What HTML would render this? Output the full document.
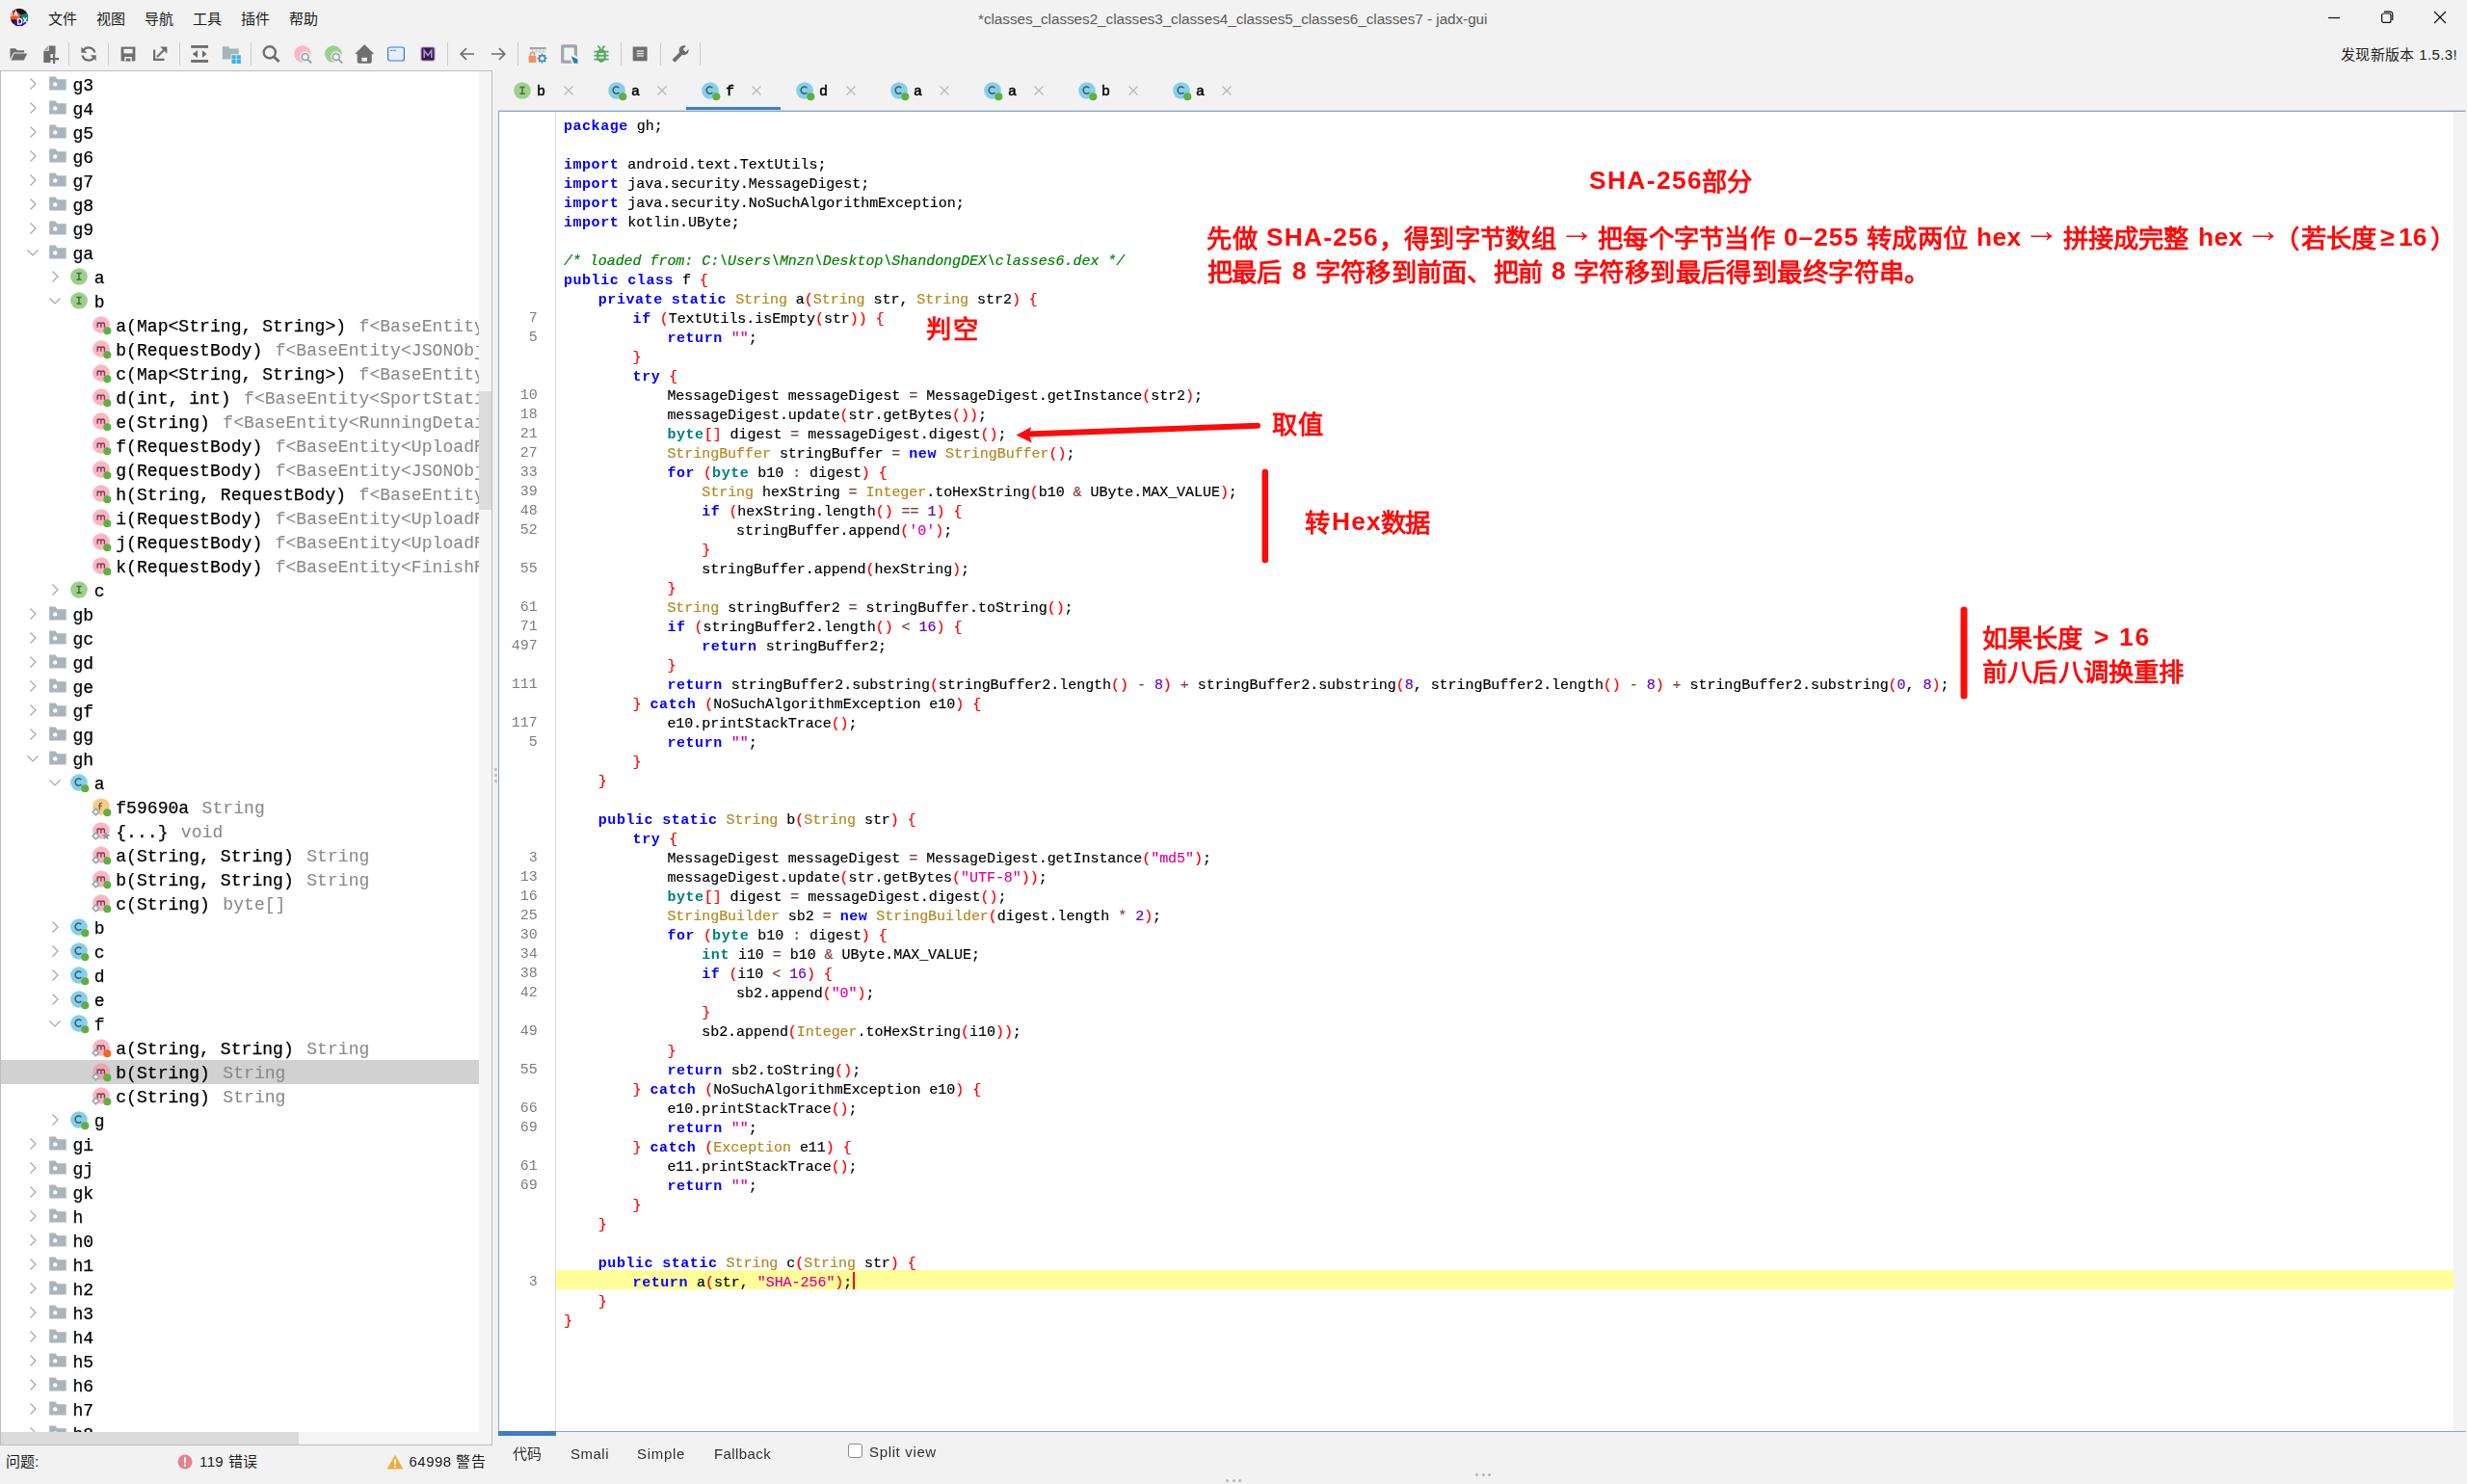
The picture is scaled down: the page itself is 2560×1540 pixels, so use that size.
<!DOCTYPE html>
<html lang="zh-CN">
<head>
<meta charset="utf-8">
<title>jadx-gui</title>
<style>
html,body{margin:0;padding:0}
body{width:2560px;height:1540px;overflow:hidden;background:#f2f2f2;position:relative;font-family:"Liberation Sans",sans-serif;font-size:15px;color:#1a1a1a}
.abs{position:absolute}
.t{position:absolute;white-space:nowrap;line-height:20px}
/* tree */
#tree{position:absolute;left:0;top:73px;width:509px;height:1425px;border:1px solid #bdbdbd;background:#fff}
#treeclip{will-change:transform;position:absolute;left:-1px;top:1px;width:498px;height:1411px;overflow:hidden}
#treeclip .tr{position:absolute;left:1px;width:496px;height:25px}
#treeclip .tr.sel{background:#d1d1d1}
#treeclip .tt{position:absolute;white-space:pre;font-family:"Liberation Mono",monospace;font-size:18px;line-height:25px;height:25px;color:#000;padding-top:2px;-webkit-text-stroke:.25px;letter-spacing:.06px}
#treeclip .g{color:#8a8a8a;margin-left:2.5px;-webkit-text-stroke:.1px}
#vtrack{position:absolute;left:496px;top:0;width:13px;height:1425px;background:#f5f5f5}
#vthumb{position:absolute;left:496px;top:332px;width:13px;height:123px;background:#dcdcdc}
#htrack{position:absolute;left:0;top:1412px;width:496px;height:13px;background:#f5f5f5}
#hthumb{position:absolute;left:0;top:1412px;width:309px;height:13px;background:#dbdbdb}
/* tabs */
.tabl{will-change:transform;position:absolute;top:85.9px;font-family:"Liberation Mono",monospace;font-weight:normal;-webkit-text-stroke:.5px;font-size:15px;line-height:20px;color:#000}
/* code */
#codep{will-change:transform;position:absolute;left:517px;top:115px;width:2042px;height:1371px;border:1px solid #7fa8d8;border-right-color:#f2f2f2;background:#fff;box-sizing:border-box}
#gutter{position:absolute;left:0;top:0;padding-top:2px;width:58px;border-right:1px solid #dddddd;height:1367px}
.gn{height:20px;line-height:20px;font-family:"Liberation Mono",monospace;font-size:15px;color:#7d7d7d;text-align:right;padding-right:18.2px;padding-top:3.4px;box-sizing:border-box}
#code{position:absolute;left:59px;top:2px;width:1969px;height:1366px;overflow:hidden}
.ln{height:20px;line-height:20px;white-space:pre;font-family:"Liberation Mono",monospace;font-size:15px;color:#000;padding-left:7.9px;padding-top:3.7px;box-sizing:border-box;letter-spacing:-0.042px;-webkit-text-stroke:.18px}
.ln.cur{background:#ffff99}
.kw{color:#0000ff;letter-spacing:.57px;-webkit-text-stroke:0}.ty{color:#008080;letter-spacing:.57px;-webkit-text-stroke:0}.cl{color:#b38820}.st{color:#dc009c}.nu{color:#6400c8}.br{color:#ff0000}.op{color:#804040}.cm{color:#008000}
.caret{display:inline-block;width:2px;height:18px;background:#ff0000;vertical-align:top;margin-top:-1.5px;margin-left:1px}
#cvtrack{position:absolute;left:2028px;top:0;width:13px;height:1369px;background:#f3f3f3}
.red{will-change:transform;position:absolute;white-space:nowrap;color:#ff0a0a;font-weight:bold;font-size:26.25px;line-height:36px;font-family:"Liberation Sans",sans-serif}
</style>
</head>
<body>
<!-- title bar -->
<svg class="abs" style="left:10px;top:8px" width="20" height="20" viewBox="0 0 20 20">
<defs><clipPath id="lc"><circle cx="10" cy="9.900" r="9.200"/></clipPath></defs>
<g clip-path="url(#lc)">
<rect width="20" height="20" fill="#17171b"/>
<path d="M0 2h5l2 4-3 4H0z" fill="#c2185b"/>
<path d="M0 7l7-3 5 3.500-3.500 8L6 12 0 13z" fill="#f4511e"/>
<path d="M12 7.500L20 5v9l-5 1-3.500-3z" fill="#00897b"/>
<path d="M4 16l4-3 7 1 3 6H6z" fill="#3514c8"/>
<path d="M2.200 3.800v3.400q0 1.600-1.600 1.300M4.800 9l1.700-5 1.700 5M5.400 7.400h2.200" stroke="#fff" stroke-width="1.300" fill="none"/>
<path d="M8.600 17.200v-5.800h1.300a2.900 2.900 0 0 1 0 5.800zM14.300 10.300l3.600 5.400M17.900 10.300l-3.600 5.400" stroke="#fff" stroke-width="1.300" fill="none"/>
</g></svg>
<div class="t" style="left:50px;top:10px">文件</div>
<div class="t" style="left:100px;top:10px">视图</div>
<div class="t" style="left:150px;top:10px">导航</div>
<div class="t" style="left:200px;top:10px">工具</div>
<div class="t" style="left:250px;top:10px">插件</div>
<div class="t" style="left:300px;top:10px">帮助</div>
<div class="t" id="title" style="left:1015px;top:9.5px;color:#5a5a5a;font-size:15.26px;letter-spacing:-.03px">*classes_classes2_classes3_classes4_classes5_classes6_classes7 - jadx-gui</div>
<svg class="abs" style="left:2412px;top:8px" width="20" height="20" viewBox="0 0 20 20"><path d="M4 10.500h12" stroke="#111" stroke-width="1.200"/></svg>
<svg class="abs" style="left:2467px;top:8px" width="20" height="20" viewBox="0 0 20 20"><rect x="4.600" y="6" width="9.400" height="9.400" rx="2" fill="none" stroke="#111" stroke-width="1.200"/><path d="M7 4.200h6.400a2.400 2.400 0 0 1 2.400 2.400v6.400" fill="none" stroke="#111" stroke-width="1.200"/></svg>
<svg class="abs" style="left:2522px;top:8px" width="20" height="20" viewBox="0 0 20 20"><path d="M4 4l12 12M16 4L4 16" stroke="#111" stroke-width="1.200"/></svg>
<!-- toolbar -->
<svg class="abs" style="left:8.6px;top:46px" width="20" height="20" viewBox="0 0 20 20"><path d="M1.5 15.5V4.2h5.6l1.8 2h7.2v2.2H5.2L1.5 15.5z" fill="#6e6e6e"/><path d="M5.8 9.4h13.4l-3.4 7H2.4z" fill="#6e6e6e"/></svg>
<svg class="abs" style="left:42.7px;top:46px" width="20" height="20" viewBox="0 0 20 20"><path d="M7.4 1.4h7.1v10h-3.9v7.5H2.3V6.5z" fill="#6e6e6e"/><path d="M2.3 6.5L7.4 1.4v5.1z" fill="#a9a9a9"/><path d="M2.3 8h12.2" stroke="#f2f2f2" stroke-width="0" /><rect x="9.4" y="10.2" width="9.6" height="9.8" fill="#f2f2f2"/><path d="M13.05 10.3v9.8M8.05 15.200h10" stroke="#6e6e6e" stroke-width="2.300"/><path d="M2.300 6.500h5.100V1.400" fill="none" stroke="#f2f2f2" stroke-width=".8"/></svg>
<svg class="abs" style="left:82.4px;top:46px" width="20" height="20" viewBox="0 0 20 20"><path d="M16.400 8.600A6.600 6.600 0 0 0 4.600 6.200" fill="none" stroke="#6e6e6e" stroke-width="2.300"/><path d="M2.300 2.800v6h6z" fill="#6e6e6e"/><path d="M3.600 11.400A6.600 6.600 0 0 0 15.400 13.800" fill="none" stroke="#6e6e6e" stroke-width="2.300"/><path d="M17.700 17.200v-6h-6z" fill="#6e6e6e"/></svg>
<svg class="abs" style="left:123.4px;top:46px" width="20" height="20" viewBox="0 0 20 20"><path d="M2.6 2.6h14.8v14.8H2.6z" fill="#6e6e6e"/><rect x="5.4" y="4.8" width="9.2" height="4.6" fill="#f2f2f2"/><rect x="6.2" y="13" width="7.6" height="4.4" fill="#f2f2f2"/><rect x="7.6" y="14.6" width="4.8" height="2.8" fill="#6e6e6e"/></svg>
<svg class="abs" style="left:155.9px;top:46px" width="20" height="20" viewBox="0 0 20 20"><path d="M3 5.5v11.5h11.5v-2.2H5.2V5.5z" fill="#6e6e6e"/><path d="M7 13L16 4" stroke="#6e6e6e" stroke-width="2.2"/><path d="M10.2 2.6h7.2v7.2z" fill="#6e6e6e"/></svg>
<svg class="abs" style="left:197.0px;top:46px" width="20" height="20" viewBox="0 0 20 20"><rect x="1.200" y="1" width="17.800" height="2.900" fill="#6e6e6e"/><rect x="1.200" y="16" width="17.800" height="2.900" fill="#6e6e6e"/><path d="M8 6.200v7.800L2.700 10.100z" fill="#6e6e6e"/><path d="M12.900 6.200v7.800L17.500 10.100z" fill="#6e6e6e"/></svg>
<svg class="abs" style="left:230.4px;top:46px" width="20" height="20" viewBox="0 0 20 20"><path d="M0.800 2.200h6.400l1.600 2.200h9v5.800H9.600v5.400H0.800z" fill="#a7b3bd"/><rect x="10.500" y="11.200" width="4.200" height="4.200" fill="#3fb0e2"/><rect x="15.600" y="11.200" width="4.200" height="4.200" fill="#3fb0e2"/><rect x="10.500" y="15.800" width="4.200" height="4.200" fill="#3fb0e2"/><rect x="15.600" y="15.800" width="4.200" height="4.200" fill="#3fb0e2"/></svg>
<svg class="abs" style="left:270.8px;top:46px" width="20" height="20" viewBox="0 0 20 20"><circle cx="8.800" cy="8.400" r="6.100" fill="none" stroke="#6e6e6e" stroke-width="2.400"/><path d="M13 12.600l5.600 5.400" stroke="#6e6e6e" stroke-width="2.900"/></svg>
<svg class="abs" style="left:303.7px;top:46px" width="20" height="20" viewBox="0 0 20 20"><circle cx="9.900" cy="10" r="8.800" fill="#fbb6c4"/><circle cx="12.900" cy="13" r="5.700" fill="#f2f2f2"/><circle cx="12.700" cy="13" r="3.500" fill="none" stroke="#8fa1ae" stroke-width="1.600"/><path d="M15.200 15.600l4 3.900" stroke="#8fa1ae" stroke-width="1.800"/></svg>
<svg class="abs" style="left:336.2px;top:46px" width="20" height="20" viewBox="0 0 20 20"><circle cx="9.900" cy="10" r="8.800" fill="#9dd08c"/><circle cx="12.900" cy="13" r="5.700" fill="#f2f2f2"/><circle cx="12.700" cy="13" r="3.500" fill="none" stroke="#8fa1ae" stroke-width="1.600"/><path d="M15.200 15.600l4 3.900" stroke="#8fa1ae" stroke-width="1.800"/></svg>
<svg class="abs" style="left:368.3px;top:46px" width="20" height="20" viewBox="0 0 20 20"><path d="M10.200 0.600L0.900 9.700h2.200v8.400a1.200 1.200 0 0 0 1.200 1.200h11.800a1.200 1.200 0 0 0 1.200-1.200V9.700h2.200z" fill="#6e6e6e" stroke="#6e6e6e" stroke-width="0.800" stroke-linejoin="round"/><rect x="7.400" y="13.800" width="5.600" height="3.800" fill="#f2f2f2"/></svg>
<svg class="abs" style="left:400.9px;top:46px" width="20" height="20" viewBox="0 0 20 20"><rect x="1.6" y="3" width="16.8" height="14" rx="2" fill="#e7effd" stroke="#3574f0" stroke-width="1.2"/><rect x="4.4" y="5.8" width="2" height="1.2" fill="#3574f0"/><rect x="7.6" y="5.8" width="2" height="1.2" fill="#3574f0"/></svg>
<svg class="abs" style="left:433.5px;top:46px" width="20" height="20" viewBox="0 0 20 20"><rect x="3" y="3" width="14" height="14" rx="1.6" fill="#2b2232" stroke="#b98af0" stroke-width="1.1"/><path d="M6.2 14V6.4l3.8 5 3.8-5V14" fill="none" stroke="#b98af0" stroke-width="1.6"/></svg>
<svg class="abs" style="left:474.8px;top:46px" width="20" height="20" viewBox="0 0 20 20"><path d="M17 10H3.6M9 4.2L3.2 10l5.8 5.8" fill="none" stroke="#6e6e6e" stroke-width="1.7"/></svg>
<svg class="abs" style="left:507.3px;top:46px" width="20" height="20" viewBox="0 0 20 20"><path d="M3 10h13.4M11 4.2l5.8 5.8-5.8 5.8" fill="none" stroke="#6e6e6e" stroke-width="1.7"/></svg>
<svg class="abs" style="left:548.1px;top:46px" width="20" height="20" viewBox="0 0 20 20"><path d="M1.8 3h17v2.2h-17z" fill="#9aa7b0"/><path d="M4.6 5v2.6M8.4 5v2.6M12.2 5v2.6M16 5v2.6M1.8 8h17" stroke="#c3cbd1" stroke-width="1.2" fill="none"/><rect x="0.6" y="12" width="7.8" height="7" rx="0.8" fill="#f49163"/><path d="M2.4 12.2v-1.6a2.1 2.1 0 0 1 4.2 0v1.6" fill="none" stroke="#f49163" stroke-width="1.5"/><circle cx="14.6" cy="14.6" r="3" fill="none" stroke="#3b8bbd" stroke-width="1.6"/><path d="M14.6 9.6v2M14.6 17.6v2M9.6 14.6h2M17.6 14.6h2M11.1 11.1l1.4 1.4M16.7 16.7l1.4 1.4M18.1 11.1l-1.4 1.4M12.5 16.7l-1.4 1.4" stroke="#3b8bbd" stroke-width="1.5"/></svg>
<svg class="abs" style="left:581.0px;top:46px" width="20" height="20" viewBox="0 0 20 20"><path d="M2.600 0.200h13.400a2 2 0 0 1 2 2V13l-3.300-2.400V3.500H4.300v12.900h6.600l1.700 3.300H2.600a1.500 1.500 0 0 1-1.500-1.500V1.700a1.500 1.500 0 0 1 1.500-1.500z" fill="#9aa7b0"/><path d="M11.800 12.200l6.700 3.300v4.200h-3.900z" fill="#2e7eab"/></svg>
<svg class="abs" style="left:613.5px;top:46px" width="20" height="20" viewBox="0 0 20 20"><ellipse cx="10" cy="11.700" rx="5" ry="7.300" fill="#5aa860"/><path d="M6.400 1.700l2.800 3M13.600 1.700l-2.800 3" stroke="#5aa860" stroke-width="1.800" fill="none"/><path d="M2.400 7.600h15.200M2.400 11.600h15.200M2.400 15.600h15.200" stroke="#5aa860" stroke-width="1.900"/><rect x="7.400" y="9" width="5.200" height="1.800" fill="#f2f2f2"/><rect x="7.400" y="12.800" width="5.200" height="1.800" fill="#f2f2f2"/></svg>
<svg class="abs" style="left:653.7px;top:46px" width="20" height="20" viewBox="0 0 20 20"><rect x="2.700" y="2.500" width="14.900" height="14.800" fill="#6e6e6e"/><path d="M6.700 6.900h7.400M6.700 9.500h7.400M6.700 12.100h7.400" stroke="#dcdcdc" stroke-width="1.500"/></svg>
<svg class="abs" style="left:696.2px;top:46px" width="20" height="20" viewBox="0 0 20 20"><path d="M2.900 17.300L12 8.200" stroke="#6e6e6e" stroke-width="4" fill="none"/><circle cx="13.600" cy="6.300" r="5" fill="#6e6e6e"/><path d="M12.700 5L17.900 -.2L20.800 2.700L15.600 7.900z" fill="#f2f2f2"/></svg>
<div class="abs" style="left:71px;top:44px;width:1px;height:24px;background:#cbcbcb"></div>
<div class="abs" style="left:112px;top:44px;width:1px;height:24px;background:#cbcbcb"></div>
<div class="abs" style="left:186px;top:44px;width:1px;height:24px;background:#cbcbcb"></div>
<div class="abs" style="left:260px;top:44px;width:1px;height:24px;background:#cbcbcb"></div>
<div class="abs" style="left:464px;top:44px;width:1px;height:24px;background:#cbcbcb"></div>
<div class="abs" style="left:537px;top:44px;width:1px;height:24px;background:#cbcbcb"></div>
<div class="abs" style="left:644px;top:44px;width:1px;height:24px;background:#cbcbcb"></div>
<div class="abs" style="left:685px;top:44px;width:1px;height:24px;background:#cbcbcb"></div>
<div class="abs" style="left:726px;top:44px;width:1px;height:24px;background:#cbcbcb"></div>
<div class="t" id="newver" style="left:2429px;top:47px;color:#222;letter-spacing:.35px">发现新版本 1.5.3!</div>
<!-- tree -->
<div id="tree">
<div id="treeclip">
<div class="tr" style="top:0px"></div>
<svg class="abs" style="left:29px;top:5.1px" width="10" height="14" viewBox="0 0 10 14"><path d="M2.5 1.5 L8 7 L2.5 12.5" fill="none" stroke="#a4a4a4" stroke-width="1.150"/></svg>
<svg class="abs" style="left:50.8px;top:3.5999999999999996px" width="18" height="15" viewBox="0 0 18 15"><path d="M0.2 0.6h6.3l2 2.6h9.2v11.2H0.2z" fill="#a9b5be"/><circle cx="6.2" cy="8.400" r="2.200" fill="#fff"/></svg>
<div class="tt" style="left:75.5px;top:0px">g3</div>
<div class="tr" style="top:25px"></div>
<svg class="abs" style="left:29px;top:30.1px" width="10" height="14" viewBox="0 0 10 14"><path d="M2.5 1.5 L8 7 L2.5 12.5" fill="none" stroke="#a4a4a4" stroke-width="1.150"/></svg>
<svg class="abs" style="left:50.8px;top:28.6px" width="18" height="15" viewBox="0 0 18 15"><path d="M0.2 0.6h6.3l2 2.6h9.2v11.2H0.2z" fill="#a9b5be"/><circle cx="6.2" cy="8.400" r="2.200" fill="#fff"/></svg>
<div class="tt" style="left:75.5px;top:25px">g4</div>
<div class="tr" style="top:50px"></div>
<svg class="abs" style="left:29px;top:55.1px" width="10" height="14" viewBox="0 0 10 14"><path d="M2.5 1.5 L8 7 L2.5 12.5" fill="none" stroke="#a4a4a4" stroke-width="1.150"/></svg>
<svg class="abs" style="left:50.8px;top:53.6px" width="18" height="15" viewBox="0 0 18 15"><path d="M0.2 0.6h6.3l2 2.6h9.2v11.2H0.2z" fill="#a9b5be"/><circle cx="6.2" cy="8.400" r="2.200" fill="#fff"/></svg>
<div class="tt" style="left:75.5px;top:50px">g5</div>
<div class="tr" style="top:75px"></div>
<svg class="abs" style="left:29px;top:80.1px" width="10" height="14" viewBox="0 0 10 14"><path d="M2.5 1.5 L8 7 L2.5 12.5" fill="none" stroke="#a4a4a4" stroke-width="1.150"/></svg>
<svg class="abs" style="left:50.8px;top:78.6px" width="18" height="15" viewBox="0 0 18 15"><path d="M0.2 0.6h6.3l2 2.6h9.2v11.2H0.2z" fill="#a9b5be"/><circle cx="6.2" cy="8.400" r="2.200" fill="#fff"/></svg>
<div class="tt" style="left:75.5px;top:75px">g6</div>
<div class="tr" style="top:100px"></div>
<svg class="abs" style="left:29px;top:105.1px" width="10" height="14" viewBox="0 0 10 14"><path d="M2.5 1.5 L8 7 L2.5 12.5" fill="none" stroke="#a4a4a4" stroke-width="1.150"/></svg>
<svg class="abs" style="left:50.8px;top:103.6px" width="18" height="15" viewBox="0 0 18 15"><path d="M0.2 0.6h6.3l2 2.6h9.2v11.2H0.2z" fill="#a9b5be"/><circle cx="6.2" cy="8.400" r="2.200" fill="#fff"/></svg>
<div class="tt" style="left:75.5px;top:100px">g7</div>
<div class="tr" style="top:125px"></div>
<svg class="abs" style="left:29px;top:130.1px" width="10" height="14" viewBox="0 0 10 14"><path d="M2.5 1.5 L8 7 L2.5 12.5" fill="none" stroke="#a4a4a4" stroke-width="1.150"/></svg>
<svg class="abs" style="left:50.8px;top:128.6px" width="18" height="15" viewBox="0 0 18 15"><path d="M0.2 0.6h6.3l2 2.6h9.2v11.2H0.2z" fill="#a9b5be"/><circle cx="6.2" cy="8.400" r="2.200" fill="#fff"/></svg>
<div class="tt" style="left:75.5px;top:125px">g8</div>
<div class="tr" style="top:150px"></div>
<svg class="abs" style="left:29px;top:155.1px" width="10" height="14" viewBox="0 0 10 14"><path d="M2.5 1.5 L8 7 L2.5 12.5" fill="none" stroke="#a4a4a4" stroke-width="1.150"/></svg>
<svg class="abs" style="left:50.8px;top:153.6px" width="18" height="15" viewBox="0 0 18 15"><path d="M0.2 0.6h6.3l2 2.6h9.2v11.2H0.2z" fill="#a9b5be"/><circle cx="6.2" cy="8.400" r="2.200" fill="#fff"/></svg>
<div class="tt" style="left:75.5px;top:150px">g9</div>
<div class="tr" style="top:175px"></div>
<svg class="abs" style="left:27px;top:181.6px" width="14" height="10" viewBox="0 0 14 10"><path d="M1.5 2.5 L7 8 L12.5 2.5" fill="none" stroke="#a4a4a4" stroke-width="1.150"/></svg>
<svg class="abs" style="left:50.8px;top:178.6px" width="18" height="15" viewBox="0 0 18 15"><path d="M0.2 0.6h6.3l2 2.6h9.2v11.2H0.2z" fill="#a9b5be"/><circle cx="6.2" cy="8.400" r="2.200" fill="#fff"/></svg>
<div class="tt" style="left:75.5px;top:175px">ga</div>
<div class="tr" style="top:200px"></div>
<svg class="abs" style="left:51.7px;top:205.1px" width="10" height="14" viewBox="0 0 10 14"><path d="M2.5 1.5 L8 7 L2.5 12.5" fill="none" stroke="#a4a4a4" stroke-width="1.150"/></svg>
<svg class="abs" style="left:72.1px;top:201.6px" width="22" height="22" viewBox="0 0 22 22"><circle cx="10" cy="10" r="8.85" fill="#9dd08c"/><path d="M7.4 6.6h5.2M7.4 13.2h5.2M10 6.6v6.6" stroke="#4d6b45" stroke-width="1.5" fill="none"/></svg>
<div class="tt" style="left:97.7px;top:200px">a</div>
<div class="tr" style="top:225px"></div>
<svg class="abs" style="left:49.7px;top:231.6px" width="14" height="10" viewBox="0 0 14 10"><path d="M1.5 2.5 L7 8 L12.5 2.5" fill="none" stroke="#a4a4a4" stroke-width="1.150"/></svg>
<svg class="abs" style="left:72.1px;top:226.6px" width="22" height="22" viewBox="0 0 22 22"><circle cx="10" cy="10" r="8.85" fill="#9dd08c"/><path d="M7.4 6.6h5.2M7.4 13.2h5.2M10 6.6v6.6" stroke="#4d6b45" stroke-width="1.5" fill="none"/></svg>
<div class="tt" style="left:97.7px;top:225px">b</div>
<div class="tr" style="top:250px"></div>
<svg class="abs" style="left:94.6px;top:251.60000000000002px" width="22" height="22" viewBox="0 0 22 22"><circle cx="10" cy="10" r="8.85" fill="#fbb6c4"/><path d="M6.2 12.8V7.6M6.2 9q1.9-2 3.6 0v3.8M9.8 9q1.900-2 3.600 0v3.800" stroke="#7c3f4b" stroke-width="1.400" fill="none"/><circle cx="16.3" cy="16.3" r="4.05" fill="#5fb041"/></svg>
<div class="tt" style="left:120.2px;top:250px">a(Map&lt;String, String&gt;) <span class="g">f&lt;BaseEntity&lt;ArrayList&lt;</span></div>
<div class="tr" style="top:275px"></div>
<svg class="abs" style="left:94.6px;top:276.6px" width="22" height="22" viewBox="0 0 22 22"><circle cx="10" cy="10" r="8.85" fill="#fbb6c4"/><path d="M6.2 12.8V7.6M6.2 9q1.9-2 3.6 0v3.8M9.8 9q1.900-2 3.600 0v3.800" stroke="#7c3f4b" stroke-width="1.400" fill="none"/><circle cx="16.3" cy="16.3" r="4.05" fill="#5fb041"/></svg>
<div class="tt" style="left:120.2px;top:275px">b(RequestBody) <span class="g">f&lt;BaseEntity&lt;JSONObject&gt;&gt;</span></div>
<div class="tr" style="top:300px"></div>
<svg class="abs" style="left:94.6px;top:301.6px" width="22" height="22" viewBox="0 0 22 22"><circle cx="10" cy="10" r="8.85" fill="#fbb6c4"/><path d="M6.2 12.8V7.6M6.2 9q1.9-2 3.6 0v3.8M9.8 9q1.900-2 3.600 0v3.800" stroke="#7c3f4b" stroke-width="1.400" fill="none"/><circle cx="16.3" cy="16.3" r="4.05" fill="#5fb041"/></svg>
<div class="tt" style="left:120.2px;top:300px">c(Map&lt;String, String&gt;) <span class="g">f&lt;BaseEntity&lt;ArrayList&lt;</span></div>
<div class="tr" style="top:325px"></div>
<svg class="abs" style="left:94.6px;top:326.6px" width="22" height="22" viewBox="0 0 22 22"><circle cx="10" cy="10" r="8.85" fill="#fbb6c4"/><path d="M6.2 12.8V7.6M6.2 9q1.9-2 3.6 0v3.8M9.8 9q1.900-2 3.600 0v3.800" stroke="#7c3f4b" stroke-width="1.400" fill="none"/><circle cx="16.3" cy="16.3" r="4.05" fill="#5fb041"/></svg>
<div class="tt" style="left:120.2px;top:325px">d(int, int) <span class="g">f&lt;BaseEntity&lt;SportStatistics&gt;&gt;</span></div>
<div class="tr" style="top:350px"></div>
<svg class="abs" style="left:94.6px;top:351.6px" width="22" height="22" viewBox="0 0 22 22"><circle cx="10" cy="10" r="8.85" fill="#fbb6c4"/><path d="M6.2 12.8V7.6M6.2 9q1.9-2 3.6 0v3.8M9.8 9q1.900-2 3.600 0v3.800" stroke="#7c3f4b" stroke-width="1.400" fill="none"/><circle cx="16.3" cy="16.3" r="4.05" fill="#5fb041"/></svg>
<div class="tt" style="left:120.2px;top:350px">e(String) <span class="g">f&lt;BaseEntity&lt;RunningDetail&gt;&gt;</span></div>
<div class="tr" style="top:375px"></div>
<svg class="abs" style="left:94.6px;top:376.6px" width="22" height="22" viewBox="0 0 22 22"><circle cx="10" cy="10" r="8.85" fill="#fbb6c4"/><path d="M6.2 12.8V7.6M6.2 9q1.9-2 3.6 0v3.8M9.8 9q1.900-2 3.600 0v3.800" stroke="#7c3f4b" stroke-width="1.400" fill="none"/><circle cx="16.3" cy="16.3" r="4.05" fill="#5fb041"/></svg>
<div class="tt" style="left:120.2px;top:375px">f(RequestBody) <span class="g">f&lt;BaseEntity&lt;UploadResult&gt;&gt;</span></div>
<div class="tr" style="top:400px"></div>
<svg class="abs" style="left:94.6px;top:401.6px" width="22" height="22" viewBox="0 0 22 22"><circle cx="10" cy="10" r="8.85" fill="#fbb6c4"/><path d="M6.2 12.8V7.6M6.2 9q1.9-2 3.6 0v3.8M9.8 9q1.900-2 3.600 0v3.800" stroke="#7c3f4b" stroke-width="1.400" fill="none"/><circle cx="16.3" cy="16.3" r="4.05" fill="#5fb041"/></svg>
<div class="tt" style="left:120.2px;top:400px">g(RequestBody) <span class="g">f&lt;BaseEntity&lt;JSONObject&gt;&gt;</span></div>
<div class="tr" style="top:425px"></div>
<svg class="abs" style="left:94.6px;top:426.6px" width="22" height="22" viewBox="0 0 22 22"><circle cx="10" cy="10" r="8.85" fill="#fbb6c4"/><path d="M6.2 12.8V7.6M6.2 9q1.9-2 3.6 0v3.8M9.8 9q1.900-2 3.600 0v3.800" stroke="#7c3f4b" stroke-width="1.400" fill="none"/><circle cx="16.3" cy="16.3" r="4.05" fill="#5fb041"/></svg>
<div class="tt" style="left:120.2px;top:425px">h(String, RequestBody) <span class="g">f&lt;BaseEntity&lt;JSONObject&gt;&gt;</span></div>
<div class="tr" style="top:450px"></div>
<svg class="abs" style="left:94.6px;top:451.6px" width="22" height="22" viewBox="0 0 22 22"><circle cx="10" cy="10" r="8.85" fill="#fbb6c4"/><path d="M6.2 12.8V7.6M6.2 9q1.9-2 3.6 0v3.8M9.8 9q1.900-2 3.600 0v3.800" stroke="#7c3f4b" stroke-width="1.400" fill="none"/><circle cx="16.3" cy="16.3" r="4.05" fill="#5fb041"/></svg>
<div class="tt" style="left:120.2px;top:450px">i(RequestBody) <span class="g">f&lt;BaseEntity&lt;UploadResult&gt;&gt;</span></div>
<div class="tr" style="top:475px"></div>
<svg class="abs" style="left:94.6px;top:476.6px" width="22" height="22" viewBox="0 0 22 22"><circle cx="10" cy="10" r="8.85" fill="#fbb6c4"/><path d="M6.2 12.8V7.6M6.2 9q1.9-2 3.6 0v3.8M9.8 9q1.900-2 3.600 0v3.800" stroke="#7c3f4b" stroke-width="1.400" fill="none"/><circle cx="16.3" cy="16.3" r="4.05" fill="#5fb041"/></svg>
<div class="tt" style="left:120.2px;top:475px">j(RequestBody) <span class="g">f&lt;BaseEntity&lt;UploadResult&gt;&gt;</span></div>
<div class="tr" style="top:500px"></div>
<svg class="abs" style="left:94.6px;top:501.6px" width="22" height="22" viewBox="0 0 22 22"><circle cx="10" cy="10" r="8.85" fill="#fbb6c4"/><path d="M6.2 12.8V7.6M6.2 9q1.9-2 3.6 0v3.8M9.8 9q1.900-2 3.600 0v3.800" stroke="#7c3f4b" stroke-width="1.400" fill="none"/><circle cx="16.3" cy="16.3" r="4.05" fill="#5fb041"/></svg>
<div class="tt" style="left:120.2px;top:500px">k(RequestBody) <span class="g">f&lt;BaseEntity&lt;FinishResult&gt;&gt;</span></div>
<div class="tr" style="top:525px"></div>
<svg class="abs" style="left:51.7px;top:530.1px" width="10" height="14" viewBox="0 0 10 14"><path d="M2.5 1.5 L8 7 L2.5 12.5" fill="none" stroke="#a4a4a4" stroke-width="1.150"/></svg>
<svg class="abs" style="left:72.1px;top:526.6px" width="22" height="22" viewBox="0 0 22 22"><circle cx="10" cy="10" r="8.85" fill="#9dd08c"/><path d="M7.4 6.6h5.2M7.4 13.2h5.2M10 6.6v6.6" stroke="#4d6b45" stroke-width="1.5" fill="none"/></svg>
<div class="tt" style="left:97.7px;top:525px">c</div>
<div class="tr" style="top:550px"></div>
<svg class="abs" style="left:29px;top:555.1px" width="10" height="14" viewBox="0 0 10 14"><path d="M2.5 1.5 L8 7 L2.5 12.5" fill="none" stroke="#a4a4a4" stroke-width="1.150"/></svg>
<svg class="abs" style="left:50.8px;top:553.6px" width="18" height="15" viewBox="0 0 18 15"><path d="M0.2 0.6h6.3l2 2.6h9.2v11.2H0.2z" fill="#a9b5be"/><circle cx="6.2" cy="8.400" r="2.200" fill="#fff"/></svg>
<div class="tt" style="left:75.5px;top:550px">gb</div>
<div class="tr" style="top:575px"></div>
<svg class="abs" style="left:29px;top:580.1px" width="10" height="14" viewBox="0 0 10 14"><path d="M2.5 1.5 L8 7 L2.5 12.5" fill="none" stroke="#a4a4a4" stroke-width="1.150"/></svg>
<svg class="abs" style="left:50.8px;top:578.6px" width="18" height="15" viewBox="0 0 18 15"><path d="M0.2 0.6h6.3l2 2.6h9.2v11.2H0.2z" fill="#a9b5be"/><circle cx="6.2" cy="8.400" r="2.200" fill="#fff"/></svg>
<div class="tt" style="left:75.5px;top:575px">gc</div>
<div class="tr" style="top:600px"></div>
<svg class="abs" style="left:29px;top:605.1px" width="10" height="14" viewBox="0 0 10 14"><path d="M2.5 1.5 L8 7 L2.5 12.5" fill="none" stroke="#a4a4a4" stroke-width="1.150"/></svg>
<svg class="abs" style="left:50.8px;top:603.6px" width="18" height="15" viewBox="0 0 18 15"><path d="M0.2 0.6h6.3l2 2.6h9.2v11.2H0.2z" fill="#a9b5be"/><circle cx="6.2" cy="8.400" r="2.200" fill="#fff"/></svg>
<div class="tt" style="left:75.5px;top:600px">gd</div>
<div class="tr" style="top:625px"></div>
<svg class="abs" style="left:29px;top:630.1px" width="10" height="14" viewBox="0 0 10 14"><path d="M2.5 1.5 L8 7 L2.5 12.5" fill="none" stroke="#a4a4a4" stroke-width="1.150"/></svg>
<svg class="abs" style="left:50.8px;top:628.6px" width="18" height="15" viewBox="0 0 18 15"><path d="M0.2 0.6h6.3l2 2.6h9.2v11.2H0.2z" fill="#a9b5be"/><circle cx="6.2" cy="8.400" r="2.200" fill="#fff"/></svg>
<div class="tt" style="left:75.5px;top:625px">ge</div>
<div class="tr" style="top:650px"></div>
<svg class="abs" style="left:29px;top:655.1px" width="10" height="14" viewBox="0 0 10 14"><path d="M2.5 1.5 L8 7 L2.5 12.5" fill="none" stroke="#a4a4a4" stroke-width="1.150"/></svg>
<svg class="abs" style="left:50.8px;top:653.6px" width="18" height="15" viewBox="0 0 18 15"><path d="M0.2 0.6h6.3l2 2.6h9.2v11.2H0.2z" fill="#a9b5be"/><circle cx="6.2" cy="8.400" r="2.200" fill="#fff"/></svg>
<div class="tt" style="left:75.5px;top:650px">gf</div>
<div class="tr" style="top:675px"></div>
<svg class="abs" style="left:29px;top:680.1px" width="10" height="14" viewBox="0 0 10 14"><path d="M2.5 1.5 L8 7 L2.5 12.5" fill="none" stroke="#a4a4a4" stroke-width="1.150"/></svg>
<svg class="abs" style="left:50.8px;top:678.6px" width="18" height="15" viewBox="0 0 18 15"><path d="M0.2 0.6h6.3l2 2.6h9.2v11.2H0.2z" fill="#a9b5be"/><circle cx="6.2" cy="8.400" r="2.200" fill="#fff"/></svg>
<div class="tt" style="left:75.5px;top:675px">gg</div>
<div class="tr" style="top:700px"></div>
<svg class="abs" style="left:27px;top:706.6px" width="14" height="10" viewBox="0 0 14 10"><path d="M1.5 2.5 L7 8 L12.5 2.5" fill="none" stroke="#a4a4a4" stroke-width="1.150"/></svg>
<svg class="abs" style="left:50.8px;top:703.6px" width="18" height="15" viewBox="0 0 18 15"><path d="M0.2 0.6h6.3l2 2.6h9.2v11.2H0.2z" fill="#a9b5be"/><circle cx="6.2" cy="8.400" r="2.200" fill="#fff"/></svg>
<div class="tt" style="left:75.5px;top:700px">gh</div>
<div class="tr" style="top:725px"></div>
<svg class="abs" style="left:49.7px;top:731.6px" width="14" height="10" viewBox="0 0 14 10"><path d="M1.5 2.5 L7 8 L12.5 2.5" fill="none" stroke="#a4a4a4" stroke-width="1.150"/></svg>
<svg class="abs" style="left:72.1px;top:726.6px" width="22" height="22" viewBox="0 0 22 22"><circle cx="10" cy="10" r="8.85" fill="#86cfe9"/><path d="M12.400 7.200a3.600 3.600 0 1 0 0 4.800" stroke="#3a5c6b" stroke-width="1.500" fill="none"/><circle cx="16.3" cy="16.3" r="4.05" fill="#5fb041"/></svg>
<div class="tt" style="left:97.7px;top:725px">a</div>
<div class="tr" style="top:750px"></div>
<svg class="abs" style="left:94.6px;top:751.6px" width="22" height="22" viewBox="0 0 22 22"><circle cx="10" cy="10" r="8.85" fill="#f7cd86"/><path d="M8.4 13.4V8.2q0-2.2 2.6-1.8M7 9.4h3.6" stroke="#7d6030" stroke-width="1.4" fill="none"/><path d="M4.4 12.2 L7.7 15.5 L4.4 18.8 L1.1 15.5Z" fill="#f4f6f7" stroke="#9aa7b0" stroke-width="1.7"/><circle cx="16.3" cy="16.3" r="4.05" fill="#5fb041"/></svg>
<div class="tt" style="left:120.2px;top:750px">f59690a <span class="g">String</span></div>
<div class="tr" style="top:775px"></div>
<svg class="abs" style="left:94.6px;top:776.6px" width="22" height="22" viewBox="0 0 22 22"><circle cx="10" cy="10" r="8.85" fill="#fbb6c4"/><path d="M6.2 12.8V7.6M6.2 9q1.9-2 3.6 0v3.8M9.8 9q1.900-2 3.600 0v3.800" stroke="#7c3f4b" stroke-width="1.400" fill="none"/><path d="M4.4 12.2 L7.7 15.5 L4.4 18.8 L1.1 15.5Z" fill="#f4f6f7" stroke="#9aa7b0" stroke-width="1.7"/><path d="M15 11.2l1.3 2.8 3 .3-2.3 2 .7 3-2.7-1.6-2.7 1.6.7-3-2.3-2 3-.3z" fill="#8c9aa5"/></svg>
<div class="tt" style="left:120.2px;top:775px">{...} <span class="g">void</span></div>
<div class="tr" style="top:800px"></div>
<svg class="abs" style="left:94.6px;top:801.6px" width="22" height="22" viewBox="0 0 22 22"><circle cx="10" cy="10" r="8.85" fill="#fbb6c4"/><path d="M6.2 12.8V7.6M6.2 9q1.9-2 3.6 0v3.8M9.8 9q1.900-2 3.600 0v3.800" stroke="#7c3f4b" stroke-width="1.400" fill="none"/><path d="M4.4 12.2 L7.7 15.5 L4.4 18.8 L1.1 15.5Z" fill="#f4f6f7" stroke="#9aa7b0" stroke-width="1.7"/><circle cx="16.3" cy="16.3" r="4.05" fill="#5fb041"/></svg>
<div class="tt" style="left:120.2px;top:800px">a(String, String) <span class="g">String</span></div>
<div class="tr" style="top:825px"></div>
<svg class="abs" style="left:94.6px;top:826.6px" width="22" height="22" viewBox="0 0 22 22"><circle cx="10" cy="10" r="8.85" fill="#fbb6c4"/><path d="M6.2 12.8V7.6M6.2 9q1.9-2 3.6 0v3.8M9.8 9q1.900-2 3.600 0v3.800" stroke="#7c3f4b" stroke-width="1.400" fill="none"/><path d="M4.4 12.2 L7.7 15.5 L4.4 18.8 L1.1 15.5Z" fill="#f4f6f7" stroke="#9aa7b0" stroke-width="1.7"/><circle cx="16.3" cy="16.3" r="4.05" fill="#5fb041"/></svg>
<div class="tt" style="left:120.2px;top:825px">b(String, String) <span class="g">String</span></div>
<div class="tr" style="top:850px"></div>
<svg class="abs" style="left:94.6px;top:851.6px" width="22" height="22" viewBox="0 0 22 22"><circle cx="10" cy="10" r="8.85" fill="#fbb6c4"/><path d="M6.2 12.8V7.6M6.2 9q1.9-2 3.6 0v3.8M9.8 9q1.900-2 3.600 0v3.800" stroke="#7c3f4b" stroke-width="1.400" fill="none"/><path d="M4.4 12.2 L7.7 15.5 L4.4 18.8 L1.1 15.5Z" fill="#f4f6f7" stroke="#9aa7b0" stroke-width="1.7"/><circle cx="16.3" cy="16.3" r="4.05" fill="#5fb041"/></svg>
<div class="tt" style="left:120.2px;top:850px">c(String) <span class="g">byte[]</span></div>
<div class="tr" style="top:875px"></div>
<svg class="abs" style="left:51.7px;top:880.1px" width="10" height="14" viewBox="0 0 10 14"><path d="M2.5 1.5 L8 7 L2.5 12.5" fill="none" stroke="#a4a4a4" stroke-width="1.150"/></svg>
<svg class="abs" style="left:72.1px;top:876.6px" width="22" height="22" viewBox="0 0 22 22"><circle cx="10" cy="10" r="8.85" fill="#86cfe9"/><path d="M12.400 7.200a3.600 3.600 0 1 0 0 4.800" stroke="#3a5c6b" stroke-width="1.500" fill="none"/><circle cx="16.3" cy="16.3" r="4.05" fill="#5fb041"/></svg>
<div class="tt" style="left:97.7px;top:875px">b</div>
<div class="tr" style="top:900px"></div>
<svg class="abs" style="left:51.7px;top:905.1px" width="10" height="14" viewBox="0 0 10 14"><path d="M2.5 1.5 L8 7 L2.5 12.5" fill="none" stroke="#a4a4a4" stroke-width="1.150"/></svg>
<svg class="abs" style="left:72.1px;top:901.6px" width="22" height="22" viewBox="0 0 22 22"><circle cx="10" cy="10" r="8.85" fill="#86cfe9"/><path d="M12.400 7.200a3.600 3.600 0 1 0 0 4.800" stroke="#3a5c6b" stroke-width="1.500" fill="none"/><circle cx="16.3" cy="16.3" r="4.05" fill="#5fb041"/></svg>
<div class="tt" style="left:97.7px;top:900px">c</div>
<div class="tr" style="top:925px"></div>
<svg class="abs" style="left:51.7px;top:930.1px" width="10" height="14" viewBox="0 0 10 14"><path d="M2.5 1.5 L8 7 L2.5 12.5" fill="none" stroke="#a4a4a4" stroke-width="1.150"/></svg>
<svg class="abs" style="left:72.1px;top:926.6px" width="22" height="22" viewBox="0 0 22 22"><circle cx="10" cy="10" r="8.85" fill="#86cfe9"/><path d="M12.400 7.200a3.600 3.600 0 1 0 0 4.800" stroke="#3a5c6b" stroke-width="1.500" fill="none"/><circle cx="16.3" cy="16.3" r="4.05" fill="#5fb041"/></svg>
<div class="tt" style="left:97.7px;top:925px">d</div>
<div class="tr" style="top:950px"></div>
<svg class="abs" style="left:51.7px;top:955.1px" width="10" height="14" viewBox="0 0 10 14"><path d="M2.5 1.5 L8 7 L2.5 12.5" fill="none" stroke="#a4a4a4" stroke-width="1.150"/></svg>
<svg class="abs" style="left:72.1px;top:951.6px" width="22" height="22" viewBox="0 0 22 22"><circle cx="10" cy="10" r="8.85" fill="#86cfe9"/><path d="M12.400 7.200a3.600 3.600 0 1 0 0 4.800" stroke="#3a5c6b" stroke-width="1.500" fill="none"/><circle cx="16.3" cy="16.3" r="4.05" fill="#5fb041"/></svg>
<div class="tt" style="left:97.7px;top:950px">e</div>
<div class="tr" style="top:975px"></div>
<svg class="abs" style="left:49.7px;top:981.6px" width="14" height="10" viewBox="0 0 14 10"><path d="M1.5 2.5 L7 8 L12.5 2.5" fill="none" stroke="#a4a4a4" stroke-width="1.150"/></svg>
<svg class="abs" style="left:72.1px;top:976.6px" width="22" height="22" viewBox="0 0 22 22"><circle cx="10" cy="10" r="8.85" fill="#86cfe9"/><path d="M12.400 7.200a3.600 3.600 0 1 0 0 4.800" stroke="#3a5c6b" stroke-width="1.500" fill="none"/><circle cx="16.3" cy="16.3" r="4.05" fill="#5fb041"/></svg>
<div class="tt" style="left:97.7px;top:975px">f</div>
<div class="tr" style="top:1000px"></div>
<svg class="abs" style="left:94.6px;top:1001.6px" width="22" height="22" viewBox="0 0 22 22"><circle cx="10" cy="10" r="8.85" fill="#fbb6c4"/><path d="M6.2 12.8V7.6M6.2 9q1.9-2 3.6 0v3.8M9.8 9q1.900-2 3.600 0v3.800" stroke="#7c3f4b" stroke-width="1.400" fill="none"/><path d="M4.4 12.2 L7.7 15.5 L4.4 18.8 L1.1 15.5Z" fill="#f4f6f7" stroke="#9aa7b0" stroke-width="1.7"/><circle cx="16.3" cy="16.3" r="4.05" fill="#f2661f"/></svg>
<div class="tt" style="left:120.2px;top:1000px">a(String, String) <span class="g">String</span></div>
<div class="tr sel" style="top:1025px"></div>
<svg class="abs" style="left:94.6px;top:1026.6px" width="22" height="22" viewBox="0 0 22 22"><circle cx="10" cy="10" r="8.85" fill="#e9a6b3"/><path d="M6.2 12.8V7.6M6.2 9q1.9-2 3.6 0v3.8M9.8 9q1.900-2 3.600 0v3.800" stroke="#7c3f4b" stroke-width="1.400" fill="none"/><path d="M4.4 12.2 L7.7 15.5 L4.4 18.8 L1.1 15.5Z" fill="#f4f6f7" stroke="#9aa7b0" stroke-width="1.7"/><circle cx="16.3" cy="16.3" r="4.05" fill="#5fb041"/></svg>
<div class="tt" style="left:120.2px;top:1025px">b(String) <span class="g">String</span></div>
<div class="tr" style="top:1050px"></div>
<svg class="abs" style="left:94.6px;top:1051.6px" width="22" height="22" viewBox="0 0 22 22"><circle cx="10" cy="10" r="8.85" fill="#fbb6c4"/><path d="M6.2 12.8V7.6M6.2 9q1.9-2 3.6 0v3.8M9.8 9q1.900-2 3.600 0v3.800" stroke="#7c3f4b" stroke-width="1.400" fill="none"/><path d="M4.4 12.2 L7.7 15.5 L4.4 18.8 L1.1 15.5Z" fill="#f4f6f7" stroke="#9aa7b0" stroke-width="1.7"/><circle cx="16.3" cy="16.3" r="4.05" fill="#5fb041"/></svg>
<div class="tt" style="left:120.2px;top:1050px">c(String) <span class="g">String</span></div>
<div class="tr" style="top:1075px"></div>
<svg class="abs" style="left:51.7px;top:1080.1px" width="10" height="14" viewBox="0 0 10 14"><path d="M2.5 1.5 L8 7 L2.5 12.5" fill="none" stroke="#a4a4a4" stroke-width="1.150"/></svg>
<svg class="abs" style="left:72.1px;top:1076.6px" width="22" height="22" viewBox="0 0 22 22"><circle cx="10" cy="10" r="8.85" fill="#86cfe9"/><path d="M12.400 7.200a3.600 3.600 0 1 0 0 4.800" stroke="#3a5c6b" stroke-width="1.500" fill="none"/><circle cx="16.3" cy="16.3" r="4.05" fill="#5fb041"/></svg>
<div class="tt" style="left:97.7px;top:1075px">g</div>
<div class="tr" style="top:1100px"></div>
<svg class="abs" style="left:29px;top:1105.1px" width="10" height="14" viewBox="0 0 10 14"><path d="M2.5 1.5 L8 7 L2.5 12.5" fill="none" stroke="#a4a4a4" stroke-width="1.150"/></svg>
<svg class="abs" style="left:50.8px;top:1103.6px" width="18" height="15" viewBox="0 0 18 15"><path d="M0.2 0.6h6.3l2 2.6h9.2v11.2H0.2z" fill="#a9b5be"/><circle cx="6.2" cy="8.400" r="2.200" fill="#fff"/></svg>
<div class="tt" style="left:75.5px;top:1100px">gi</div>
<div class="tr" style="top:1125px"></div>
<svg class="abs" style="left:29px;top:1130.1px" width="10" height="14" viewBox="0 0 10 14"><path d="M2.5 1.5 L8 7 L2.5 12.5" fill="none" stroke="#a4a4a4" stroke-width="1.150"/></svg>
<svg class="abs" style="left:50.8px;top:1128.6px" width="18" height="15" viewBox="0 0 18 15"><path d="M0.2 0.6h6.3l2 2.6h9.2v11.2H0.2z" fill="#a9b5be"/><circle cx="6.2" cy="8.400" r="2.200" fill="#fff"/></svg>
<div class="tt" style="left:75.5px;top:1125px">gj</div>
<div class="tr" style="top:1150px"></div>
<svg class="abs" style="left:29px;top:1155.1px" width="10" height="14" viewBox="0 0 10 14"><path d="M2.5 1.5 L8 7 L2.5 12.5" fill="none" stroke="#a4a4a4" stroke-width="1.150"/></svg>
<svg class="abs" style="left:50.8px;top:1153.6px" width="18" height="15" viewBox="0 0 18 15"><path d="M0.2 0.6h6.3l2 2.6h9.2v11.2H0.2z" fill="#a9b5be"/><circle cx="6.2" cy="8.400" r="2.200" fill="#fff"/></svg>
<div class="tt" style="left:75.5px;top:1150px">gk</div>
<div class="tr" style="top:1175px"></div>
<svg class="abs" style="left:29px;top:1180.1px" width="10" height="14" viewBox="0 0 10 14"><path d="M2.5 1.5 L8 7 L2.5 12.5" fill="none" stroke="#a4a4a4" stroke-width="1.150"/></svg>
<svg class="abs" style="left:50.8px;top:1178.6px" width="18" height="15" viewBox="0 0 18 15"><path d="M0.2 0.6h6.3l2 2.6h9.2v11.2H0.2z" fill="#a9b5be"/><circle cx="6.2" cy="8.400" r="2.200" fill="#fff"/></svg>
<div class="tt" style="left:75.5px;top:1175px">h</div>
<div class="tr" style="top:1200px"></div>
<svg class="abs" style="left:29px;top:1205.1px" width="10" height="14" viewBox="0 0 10 14"><path d="M2.5 1.5 L8 7 L2.5 12.5" fill="none" stroke="#a4a4a4" stroke-width="1.150"/></svg>
<svg class="abs" style="left:50.8px;top:1203.6px" width="18" height="15" viewBox="0 0 18 15"><path d="M0.2 0.6h6.3l2 2.6h9.2v11.2H0.2z" fill="#a9b5be"/><circle cx="6.2" cy="8.400" r="2.200" fill="#fff"/></svg>
<div class="tt" style="left:75.5px;top:1200px">h0</div>
<div class="tr" style="top:1225px"></div>
<svg class="abs" style="left:29px;top:1230.1px" width="10" height="14" viewBox="0 0 10 14"><path d="M2.5 1.5 L8 7 L2.5 12.5" fill="none" stroke="#a4a4a4" stroke-width="1.150"/></svg>
<svg class="abs" style="left:50.8px;top:1228.6px" width="18" height="15" viewBox="0 0 18 15"><path d="M0.2 0.6h6.3l2 2.6h9.2v11.2H0.2z" fill="#a9b5be"/><circle cx="6.2" cy="8.400" r="2.200" fill="#fff"/></svg>
<div class="tt" style="left:75.5px;top:1225px">h1</div>
<div class="tr" style="top:1250px"></div>
<svg class="abs" style="left:29px;top:1255.1px" width="10" height="14" viewBox="0 0 10 14"><path d="M2.5 1.5 L8 7 L2.5 12.5" fill="none" stroke="#a4a4a4" stroke-width="1.150"/></svg>
<svg class="abs" style="left:50.8px;top:1253.6px" width="18" height="15" viewBox="0 0 18 15"><path d="M0.2 0.6h6.3l2 2.6h9.2v11.2H0.2z" fill="#a9b5be"/><circle cx="6.2" cy="8.400" r="2.200" fill="#fff"/></svg>
<div class="tt" style="left:75.5px;top:1250px">h2</div>
<div class="tr" style="top:1275px"></div>
<svg class="abs" style="left:29px;top:1280.1px" width="10" height="14" viewBox="0 0 10 14"><path d="M2.5 1.5 L8 7 L2.5 12.5" fill="none" stroke="#a4a4a4" stroke-width="1.150"/></svg>
<svg class="abs" style="left:50.8px;top:1278.6px" width="18" height="15" viewBox="0 0 18 15"><path d="M0.2 0.6h6.3l2 2.6h9.2v11.2H0.2z" fill="#a9b5be"/><circle cx="6.2" cy="8.400" r="2.200" fill="#fff"/></svg>
<div class="tt" style="left:75.5px;top:1275px">h3</div>
<div class="tr" style="top:1300px"></div>
<svg class="abs" style="left:29px;top:1305.1px" width="10" height="14" viewBox="0 0 10 14"><path d="M2.5 1.5 L8 7 L2.5 12.5" fill="none" stroke="#a4a4a4" stroke-width="1.150"/></svg>
<svg class="abs" style="left:50.8px;top:1303.6px" width="18" height="15" viewBox="0 0 18 15"><path d="M0.2 0.6h6.3l2 2.6h9.2v11.2H0.2z" fill="#a9b5be"/><circle cx="6.2" cy="8.400" r="2.200" fill="#fff"/></svg>
<div class="tt" style="left:75.5px;top:1300px">h4</div>
<div class="tr" style="top:1325px"></div>
<svg class="abs" style="left:29px;top:1330.1px" width="10" height="14" viewBox="0 0 10 14"><path d="M2.5 1.5 L8 7 L2.5 12.5" fill="none" stroke="#a4a4a4" stroke-width="1.150"/></svg>
<svg class="abs" style="left:50.8px;top:1328.6px" width="18" height="15" viewBox="0 0 18 15"><path d="M0.2 0.6h6.3l2 2.6h9.2v11.2H0.2z" fill="#a9b5be"/><circle cx="6.2" cy="8.400" r="2.200" fill="#fff"/></svg>
<div class="tt" style="left:75.5px;top:1325px">h5</div>
<div class="tr" style="top:1350px"></div>
<svg class="abs" style="left:29px;top:1355.1px" width="10" height="14" viewBox="0 0 10 14"><path d="M2.5 1.5 L8 7 L2.5 12.5" fill="none" stroke="#a4a4a4" stroke-width="1.150"/></svg>
<svg class="abs" style="left:50.8px;top:1353.6px" width="18" height="15" viewBox="0 0 18 15"><path d="M0.2 0.6h6.3l2 2.6h9.2v11.2H0.2z" fill="#a9b5be"/><circle cx="6.2" cy="8.400" r="2.200" fill="#fff"/></svg>
<div class="tt" style="left:75.5px;top:1350px">h6</div>
<div class="tr" style="top:1375px"></div>
<svg class="abs" style="left:29px;top:1380.1px" width="10" height="14" viewBox="0 0 10 14"><path d="M2.5 1.5 L8 7 L2.5 12.5" fill="none" stroke="#a4a4a4" stroke-width="1.150"/></svg>
<svg class="abs" style="left:50.8px;top:1378.6px" width="18" height="15" viewBox="0 0 18 15"><path d="M0.2 0.6h6.3l2 2.6h9.2v11.2H0.2z" fill="#a9b5be"/><circle cx="6.2" cy="8.400" r="2.200" fill="#fff"/></svg>
<div class="tt" style="left:75.5px;top:1375px">h7</div>
<div class="tr" style="top:1400px"></div>
<svg class="abs" style="left:29px;top:1405.1px" width="10" height="14" viewBox="0 0 10 14"><path d="M2.5 1.5 L8 7 L2.5 12.5" fill="none" stroke="#a4a4a4" stroke-width="1.150"/></svg>
<svg class="abs" style="left:50.8px;top:1403.6px" width="18" height="15" viewBox="0 0 18 15"><path d="M0.2 0.6h6.3l2 2.6h9.2v11.2H0.2z" fill="#a9b5be"/><circle cx="6.2" cy="8.400" r="2.200" fill="#fff"/></svg>
<div class="tt" style="left:75.5px;top:1400px">h8</div>
</div>
<div id="vtrack"></div><div id="vthumb"></div>
<div id="htrack"></div><div id="hthumb"></div>
</div>
<!-- splitter dots -->
<div class="abs" style="left:513px;top:797px;width:3px;height:3px;border-radius:2px;background:#b8b8b8"></div>
<div class="abs" style="left:513px;top:803px;width:3px;height:3px;border-radius:2px;background:#b8b8b8"></div>
<div class="abs" style="left:513px;top:809px;width:3px;height:3px;border-radius:2px;background:#b8b8b8"></div>
<!-- tabs -->
<svg class="abs" style="left:532.1px;top:83.5px" width="22" height="22" viewBox="0 0 22 22"><circle cx="10" cy="10" r="8.85" fill="#9dd08c"/><path d="M7.4 6.6h5.2M7.4 13.2h5.2M10 6.6v6.6" stroke="#4d6b45" stroke-width="1.5" fill="none"/></svg>
<div class="tabl" style="left:557.40px">b</div>
<svg class="abs" style="left:583.7px;top:88.0px" width="12" height="12" viewBox="0 0 12 12"><path d="M1.5 1.5L10.5 10.5M10.5 1.5L1.5 10.5" stroke="#b3babf" stroke-width="1.3" fill="none"/></svg>
<svg class="abs" style="left:629.75px;top:83.5px" width="22" height="22" viewBox="0 0 22 22"><circle cx="10" cy="10" r="8.85" fill="#86cfe9"/><path d="M12.400 7.200a3.600 3.600 0 1 0 0 4.800" stroke="#3a5c6b" stroke-width="1.500" fill="none"/><circle cx="16.3" cy="16.3" r="4.05" fill="#5fb041"/></svg>
<div class="tabl" style="left:655.05px">a</div>
<svg class="abs" style="left:681.35px;top:88.0px" width="12" height="12" viewBox="0 0 12 12"><path d="M1.5 1.5L10.5 10.5M10.5 1.5L1.5 10.5" stroke="#b3babf" stroke-width="1.3" fill="none"/></svg>
<svg class="abs" style="left:727.4px;top:83.5px" width="22" height="22" viewBox="0 0 22 22"><circle cx="10" cy="10" r="8.85" fill="#86cfe9"/><path d="M12.400 7.200a3.600 3.600 0 1 0 0 4.800" stroke="#3a5c6b" stroke-width="1.500" fill="none"/><circle cx="16.3" cy="16.3" r="4.05" fill="#5fb041"/></svg>
<div class="tabl" style="left:752.70px">f</div>
<svg class="abs" style="left:779.0px;top:88.0px" width="12" height="12" viewBox="0 0 12 12"><path d="M1.5 1.5L10.5 10.5M10.5 1.5L1.5 10.5" stroke="#b3babf" stroke-width="1.3" fill="none"/></svg>
<svg class="abs" style="left:825.0500000000001px;top:83.5px" width="22" height="22" viewBox="0 0 22 22"><circle cx="10" cy="10" r="8.85" fill="#86cfe9"/><path d="M12.400 7.200a3.600 3.600 0 1 0 0 4.800" stroke="#3a5c6b" stroke-width="1.500" fill="none"/><circle cx="16.3" cy="16.3" r="4.05" fill="#5fb041"/></svg>
<div class="tabl" style="left:850.35px">d</div>
<svg class="abs" style="left:876.6500000000001px;top:88.0px" width="12" height="12" viewBox="0 0 12 12"><path d="M1.5 1.5L10.5 10.5M10.5 1.5L1.5 10.5" stroke="#b3babf" stroke-width="1.3" fill="none"/></svg>
<svg class="abs" style="left:922.7px;top:83.5px" width="22" height="22" viewBox="0 0 22 22"><circle cx="10" cy="10" r="8.85" fill="#86cfe9"/><path d="M12.400 7.200a3.600 3.600 0 1 0 0 4.800" stroke="#3a5c6b" stroke-width="1.500" fill="none"/><circle cx="16.3" cy="16.3" r="4.05" fill="#5fb041"/></svg>
<div class="tabl" style="left:948.00px">a</div>
<svg class="abs" style="left:974.3000000000001px;top:88.0px" width="12" height="12" viewBox="0 0 12 12"><path d="M1.5 1.5L10.5 10.5M10.5 1.5L1.5 10.5" stroke="#b3babf" stroke-width="1.3" fill="none"/></svg>
<svg class="abs" style="left:1020.3500000000001px;top:83.5px" width="22" height="22" viewBox="0 0 22 22"><circle cx="10" cy="10" r="8.85" fill="#86cfe9"/><path d="M12.400 7.200a3.600 3.600 0 1 0 0 4.800" stroke="#3a5c6b" stroke-width="1.500" fill="none"/><circle cx="16.3" cy="16.3" r="4.05" fill="#5fb041"/></svg>
<div class="tabl" style="left:1045.65px">a</div>
<svg class="abs" style="left:1071.95px;top:88.0px" width="12" height="12" viewBox="0 0 12 12"><path d="M1.5 1.5L10.5 10.5M10.5 1.5L1.5 10.5" stroke="#b3babf" stroke-width="1.3" fill="none"/></svg>
<svg class="abs" style="left:1118.0000000000002px;top:83.5px" width="22" height="22" viewBox="0 0 22 22"><circle cx="10" cy="10" r="8.85" fill="#86cfe9"/><path d="M12.400 7.200a3.600 3.600 0 1 0 0 4.800" stroke="#3a5c6b" stroke-width="1.500" fill="none"/><circle cx="16.3" cy="16.3" r="4.05" fill="#5fb041"/></svg>
<div class="tabl" style="left:1143.30px">b</div>
<svg class="abs" style="left:1169.6000000000001px;top:88.0px" width="12" height="12" viewBox="0 0 12 12"><path d="M1.5 1.5L10.5 10.5M10.5 1.5L1.5 10.5" stroke="#b3babf" stroke-width="1.3" fill="none"/></svg>
<svg class="abs" style="left:1215.65px;top:83.5px" width="22" height="22" viewBox="0 0 22 22"><circle cx="10" cy="10" r="8.85" fill="#86cfe9"/><path d="M12.400 7.200a3.600 3.600 0 1 0 0 4.800" stroke="#3a5c6b" stroke-width="1.500" fill="none"/><circle cx="16.3" cy="16.3" r="4.05" fill="#5fb041"/></svg>
<div class="tabl" style="left:1240.95px">a</div>
<svg class="abs" style="left:1267.25px;top:88.0px" width="12" height="12" viewBox="0 0 12 12"><path d="M1.5 1.5L10.5 10.5M10.5 1.5L1.5 10.5" stroke="#b3babf" stroke-width="1.3" fill="none"/></svg>
<div class="abs" style="left:517px;top:114px;width:2042px;height:1px;background:#d6d6d6"></div>
<div class="abs" style="left:712px;top:111px;width:98px;height:3px;background:#3d7ec8"></div>
<!-- code panel -->
<div id="codep">
<div id="gutter">
<div class="gn"></div>
<div class="gn"></div>
<div class="gn"></div>
<div class="gn"></div>
<div class="gn"></div>
<div class="gn"></div>
<div class="gn"></div>
<div class="gn"></div>
<div class="gn"></div>
<div class="gn"></div>
<div class="gn">7</div>
<div class="gn">5</div>
<div class="gn"></div>
<div class="gn"></div>
<div class="gn">10</div>
<div class="gn">18</div>
<div class="gn">21</div>
<div class="gn">27</div>
<div class="gn">33</div>
<div class="gn">39</div>
<div class="gn">48</div>
<div class="gn">52</div>
<div class="gn"></div>
<div class="gn">55</div>
<div class="gn"></div>
<div class="gn">61</div>
<div class="gn">71</div>
<div class="gn">497</div>
<div class="gn"></div>
<div class="gn">111</div>
<div class="gn"></div>
<div class="gn">117</div>
<div class="gn">5</div>
<div class="gn"></div>
<div class="gn"></div>
<div class="gn"></div>
<div class="gn"></div>
<div class="gn"></div>
<div class="gn">3</div>
<div class="gn">13</div>
<div class="gn">16</div>
<div class="gn">25</div>
<div class="gn">30</div>
<div class="gn">34</div>
<div class="gn">38</div>
<div class="gn">42</div>
<div class="gn"></div>
<div class="gn">49</div>
<div class="gn"></div>
<div class="gn">55</div>
<div class="gn"></div>
<div class="gn">66</div>
<div class="gn">69</div>
<div class="gn"></div>
<div class="gn">61</div>
<div class="gn">69</div>
<div class="gn"></div>
<div class="gn"></div>
<div class="gn"></div>
<div class="gn"></div>
<div class="gn">3</div>
<div class="gn"></div>
<div class="gn"></div>
</div>
<div id="code">
<div class="ln"><b class="kw">package</b> gh;</div>
<div class="ln"></div>
<div class="ln"><b class="kw">import</b> android.text.TextUtils;</div>
<div class="ln"><b class="kw">import</b> java.security.MessageDigest;</div>
<div class="ln"><b class="kw">import</b> java.security.NoSuchAlgorithmException;</div>
<div class="ln"><b class="kw">import</b> kotlin.UByte;</div>
<div class="ln"></div>
<div class="ln"><i class="cm">/* loaded from: C:\Users\Mnzn\Desktop\ShandongDEX\classes6.dex */</i></div>
<div class="ln"><b class="kw">public</b> <b class="kw">class</b> f <span class="br">{</span></div>
<div class="ln">    <b class="kw">private</b> <b class="kw">static</b> <span class="cl">String</span> a<span class="br">(</span><span class="cl">String</span> str, <span class="cl">String</span> str2<span class="br">)</span> <span class="br">{</span></div>
<div class="ln">        <b class="kw">if</b> <span class="br">(</span>TextUtils.isEmpty<span class="br">(</span>str<span class="br">)</span><span class="br">)</span> <span class="br">{</span></div>
<div class="ln">            <b class="kw">return</b> <span class="st">""</span>;</div>
<div class="ln">        <span class="br">}</span></div>
<div class="ln">        <b class="kw">try</b> <span class="br">{</span></div>
<div class="ln">            MessageDigest messageDigest <span class="op">=</span> MessageDigest.getInstance<span class="br">(</span>str2<span class="br">)</span>;</div>
<div class="ln">            messageDigest.update<span class="br">(</span>str.getBytes<span class="br">(</span><span class="br">)</span><span class="br">)</span>;</div>
<div class="ln">            <b class="ty">byte</b><span class="br">[</span><span class="br">]</span> digest <span class="op">=</span> messageDigest.digest<span class="br">(</span><span class="br">)</span>;</div>
<div class="ln">            <span class="cl">StringBuffer</span> stringBuffer <span class="op">=</span> <b class="kw">new</b> <span class="cl">StringBuffer</span><span class="br">(</span><span class="br">)</span>;</div>
<div class="ln">            <b class="kw">for</b> <span class="br">(</span><b class="ty">byte</b> b10 <span class="op">:</span> digest<span class="br">)</span> <span class="br">{</span></div>
<div class="ln">                <span class="cl">String</span> hexString <span class="op">=</span> <span class="cl">Integer</span>.toHexString<span class="br">(</span>b10 <span class="op">&amp;</span> UByte.MAX_VALUE<span class="br">)</span>;</div>
<div class="ln">                <b class="kw">if</b> <span class="br">(</span>hexString.length<span class="br">(</span><span class="br">)</span> <span class="op">==</span> <span class="nu">1</span><span class="br">)</span> <span class="br">{</span></div>
<div class="ln">                    stringBuffer.append<span class="br">(</span><span class="st">'0'</span><span class="br">)</span>;</div>
<div class="ln">                <span class="br">}</span></div>
<div class="ln">                stringBuffer.append<span class="br">(</span>hexString<span class="br">)</span>;</div>
<div class="ln">            <span class="br">}</span></div>
<div class="ln">            <span class="cl">String</span> stringBuffer2 <span class="op">=</span> stringBuffer.toString<span class="br">(</span><span class="br">)</span>;</div>
<div class="ln">            <b class="kw">if</b> <span class="br">(</span>stringBuffer2.length<span class="br">(</span><span class="br">)</span> <span class="op">&lt;</span> <span class="nu">16</span><span class="br">)</span> <span class="br">{</span></div>
<div class="ln">                <b class="kw">return</b> stringBuffer2;</div>
<div class="ln">            <span class="br">}</span></div>
<div class="ln">            <b class="kw">return</b> stringBuffer2.substring<span class="br">(</span>stringBuffer2.length<span class="br">(</span><span class="br">)</span> <span class="op">-</span> <span class="nu">8</span><span class="br">)</span> <span class="op">+</span> stringBuffer2.substring<span class="br">(</span><span class="nu">8</span>, stringBuffer2.length<span class="br">(</span><span class="br">)</span> <span class="op">-</span> <span class="nu">8</span><span class="br">)</span> <span class="op">+</span> stringBuffer2.substring<span class="br">(</span><span class="nu">0</span>, <span class="nu">8</span><span class="br">)</span>;</div>
<div class="ln">        <span class="br">}</span> <b class="kw">catch</b> <span class="br">(</span>NoSuchAlgorithmException e10<span class="br">)</span> <span class="br">{</span></div>
<div class="ln">            e10.printStackTrace<span class="br">(</span><span class="br">)</span>;</div>
<div class="ln">            <b class="kw">return</b> <span class="st">""</span>;</div>
<div class="ln">        <span class="br">}</span></div>
<div class="ln">    <span class="br">}</span></div>
<div class="ln"></div>
<div class="ln">    <b class="kw">public</b> <b class="kw">static</b> <span class="cl">String</span> b<span class="br">(</span><span class="cl">String</span> str<span class="br">)</span> <span class="br">{</span></div>
<div class="ln">        <b class="kw">try</b> <span class="br">{</span></div>
<div class="ln">            MessageDigest messageDigest <span class="op">=</span> MessageDigest.getInstance<span class="br">(</span><span class="st">"md5"</span><span class="br">)</span>;</div>
<div class="ln">            messageDigest.update<span class="br">(</span>str.getBytes<span class="br">(</span><span class="st">"UTF-8"</span><span class="br">)</span><span class="br">)</span>;</div>
<div class="ln">            <b class="ty">byte</b><span class="br">[</span><span class="br">]</span> digest <span class="op">=</span> messageDigest.digest<span class="br">(</span><span class="br">)</span>;</div>
<div class="ln">            <span class="cl">StringBuilder</span> sb2 <span class="op">=</span> <b class="kw">new</b> <span class="cl">StringBuilder</span><span class="br">(</span>digest.length <span class="op">*</span> <span class="nu">2</span><span class="br">)</span>;</div>
<div class="ln">            <b class="kw">for</b> <span class="br">(</span><b class="ty">byte</b> b10 <span class="op">:</span> digest<span class="br">)</span> <span class="br">{</span></div>
<div class="ln">                <b class="ty">int</b> i10 <span class="op">=</span> b10 <span class="op">&amp;</span> UByte.MAX_VALUE;</div>
<div class="ln">                <b class="kw">if</b> <span class="br">(</span>i10 <span class="op">&lt;</span> <span class="nu">16</span><span class="br">)</span> <span class="br">{</span></div>
<div class="ln">                    sb2.append<span class="br">(</span><span class="st">"0"</span><span class="br">)</span>;</div>
<div class="ln">                <span class="br">}</span></div>
<div class="ln">                sb2.append<span class="br">(</span><span class="cl">Integer</span>.toHexString<span class="br">(</span>i10<span class="br">)</span><span class="br">)</span>;</div>
<div class="ln">            <span class="br">}</span></div>
<div class="ln">            <b class="kw">return</b> sb2.toString<span class="br">(</span><span class="br">)</span>;</div>
<div class="ln">        <span class="br">}</span> <b class="kw">catch</b> <span class="br">(</span>NoSuchAlgorithmException e10<span class="br">)</span> <span class="br">{</span></div>
<div class="ln">            e10.printStackTrace<span class="br">(</span><span class="br">)</span>;</div>
<div class="ln">            <b class="kw">return</b> <span class="st">""</span>;</div>
<div class="ln">        <span class="br">}</span> <b class="kw">catch</b> <span class="br">(</span><span class="cl">Exception</span> e11<span class="br">)</span> <span class="br">{</span></div>
<div class="ln">            e11.printStackTrace<span class="br">(</span><span class="br">)</span>;</div>
<div class="ln">            <b class="kw">return</b> <span class="st">""</span>;</div>
<div class="ln">        <span class="br">}</span></div>
<div class="ln">    <span class="br">}</span></div>
<div class="ln"></div>
<div class="ln">    <b class="kw">public</b> <b class="kw">static</b> <span class="cl">String</span> c<span class="br">(</span><span class="cl">String</span> str<span class="br">)</span> <span class="br">{</span></div>
<div class="ln cur">        <b class="kw">return</b> a<span class="br">(</span>str, <span class="st">"SHA-256"</span><span class="br">)</span>;<span class="caret"></span></div>
<div class="ln">    <span class="br">}</span></div>
<div class="ln"><span class="br">}</span></div>
</div>
<div id="cvtrack"></div>
</div>
<!-- annotations -->
<span class="red" style="left:1648.60px;top:168.5px;letter-spacing:1.450px">SHA-256</span><span class="red" style="left:1765.60px;top:170.9px;letter-spacing:-0.200px">部分</span><span class="red" style="left:1252.10px;top:230.0px;letter-spacing:0.600px">先做</span><span class="red" style="left:1313.60px;top:227.6px;letter-spacing:1.283px">SHA-256</span><span class="red" style="left:1431.00px;top:230.0px">，</span><span class="red" style="left:1457.20px;top:230.0px;letter-spacing:0.320px">得到字节数组</span><span class="red" style="left:1618.00px;top:214.5px;transform:scale(1.4,1.35);transform-origin:0 0">→</span><span class="red" style="left:1658.10px;top:230.0px;letter-spacing:0.283px">把每个字节当作</span><span class="red" style="left:1851.20px;top:227.6px;letter-spacing:1.000px">0–255</span><span class="red" style="left:1937.00px;top:230.0px;letter-spacing:0.267px">转成两位</span><span class="red" style="left:2050.60px;top:227.6px;letter-spacing:0.450px">hex</span><span class="red" style="left:2099.71px;top:214.5px;transform:scale(1.419,1.35);transform-origin:0 0">→</span><span class="red" style="left:2141.30px;top:230.0px;letter-spacing:-0.100px">拼接成完整</span><span class="red" style="left:2281.00px;top:227.6px;letter-spacing:0.400px">hex</span><span class="red" style="left:2329.88px;top:214.5px;transform:scale(1.425,1.35);transform-origin:0 0">→</span><span class="red" style="left:2360.10px;top:230.0px">（</span><span class="red" style="left:2388.30px;top:230.0px;letter-spacing:0.200px">若长度</span><span class="red" style="left:2470.30px;top:227.6px">≥</span><span class="red" style="left:2488.90px;top:227.6px;letter-spacing:0.100px">16</span><span class="red" style="left:2521.60px;top:230.0px">）</span><span class="red" style="left:1253.00px;top:265.4px;letter-spacing:-0.750px">把最后</span><span class="red" style="left:1341.00px;top:263.0px">8</span><span class="red" style="left:1364.90px;top:265.4px;letter-spacing:0.167px">字符移到前面、</span><span class="red" style="left:1549.50px;top:265.4px;letter-spacing:-0.600px">把前</span><span class="red" style="left:1610.00px;top:263.0px">8</span><span class="red" style="left:1633.40px;top:265.4px;letter-spacing:0.415px">字符移到最后得到最终字符串。</span><span class="red" style="left:961.10px;top:324.1px;letter-spacing:1.800px">判空</span><span class="red" style="left:1320.00px;top:423.0px;letter-spacing:1.100px">取值</span><span class="red" style="left:1354.00px;top:525.1px">转</span><span class="red" style="left:1381.90px;top:522.7px;letter-spacing:1.250px">Hex</span><span class="red" style="left:1433.20px;top:525.1px;letter-spacing:-0.600px">数据</span><span class="red" style="left:2057.20px;top:645.0px;letter-spacing:0.133px">如果长度</span><span class="red" style="left:2172.80px;top:642.6px">&gt;</span><span class="red" style="left:2199.10px;top:642.6px;letter-spacing:1.900px">16</span><span class="red" style="left:2057.20px;top:680.2px;letter-spacing:0.186px">前八后八调换重排</span>
<svg class="abs" style="left:1040px;top:420px" width="280" height="170" viewBox="1040 420 280 170">
<path d="M1305 441.800L1066 450.600" stroke="#ff0a0a" stroke-width="6" stroke-linecap="round" fill="none"/>
<path d="M1054.500 451.600L1070.200 443L1067.800 451L1070.800 459.600z" fill="#ff0a0a"/>
<path d="M1312.800 490V581" stroke="#ff0a0a" stroke-width="6.500" stroke-linecap="round" fill="none"/>
</svg>
<svg class="abs" style="left:2028px;top:620px" width="20" height="116" viewBox="2028 620 20 116">
<path d="M2038 633V722" stroke="#ff0a0a" stroke-width="7" stroke-linecap="round" fill="none"/>
</svg>
<!-- bottom tabs -->
<div class="abs" style="left:517px;top:1485px;width:60px;height:4.5px;background:#3d7ec8"></div>
<div class="t" style="left:532px;top:1498.5px;color:#2e2e2e">代码</div>
<div class="t" style="left:592px;top:1498.500px;letter-spacing:.5px;color:#2e2e2e">Smali</div>
<div class="t" style="left:661px;top:1498.500px;letter-spacing:.7px;color:#2e2e2e">Simple</div>
<div class="t" style="left:741px;top:1498.500px;letter-spacing:.4px;color:#2e2e2e">Fallback</div>
<div class="abs" style="left:880px;top:1498px;width:15px;height:15px;border:1px solid #8a8a8a;border-radius:3px;background:#fff;box-sizing:border-box"></div>
<div class="t" style="left:902px;top:1497px;letter-spacing:.65px;color:#2e2e2e">Split view</div>
<!-- status -->
<div class="t" style="left:6px;top:1507px">问题:</div>
<svg class="abs" style="left:184px;top:1509px" width="16" height="16" viewBox="0 0 16 16"><circle cx="8" cy="8" r="7.500" fill="#e5838a"/><rect x="7" y="3.400" width="2" height="6" fill="#fff"/><rect x="7" y="10.600" width="2" height="2" fill="#fff"/></svg>
<div class="t" style="left:207px;top:1507px;letter-spacing:.4px">119 错误</div>
<svg class="abs" style="left:401px;top:1509px" width="18" height="16" viewBox="0 0 18 16"><path d="M9 .8L17.400 15.400H.6z" fill="#f5a83a"/><rect x="8" y="5.400" width="2" height="5.400" fill="#fff"/><rect x="8" y="12" width="2" height="2" fill="#fff"/></svg>
<div class="t" style="left:424.5px;top:1507px;letter-spacing:.5px">64998 警告</div>
<!-- bottom dots -->
<div class="abs" style="left:1272px;top:1535px;width:3.400px;height:3.400px;border-radius:2px;background:#b3b3b3"></div>
<div class="abs" style="left:1278.500px;top:1535px;width:3.400px;height:3.400px;border-radius:2px;background:#b3b3b3"></div>
<div class="abs" style="left:1285px;top:1535px;width:3.400px;height:3.400px;border-radius:2px;background:#b3b3b3"></div>
<div class="abs" style="left:1531px;top:1528.500px;width:3.400px;height:3.400px;border-radius:2px;background:#b3b3b3"></div>
<div class="abs" style="left:1537.500px;top:1528.500px;width:3.400px;height:3.400px;border-radius:2px;background:#b3b3b3"></div>
<div class="abs" style="left:1544px;top:1528.500px;width:3.400px;height:3.400px;border-radius:2px;background:#b3b3b3"></div>
</body>
</html>
